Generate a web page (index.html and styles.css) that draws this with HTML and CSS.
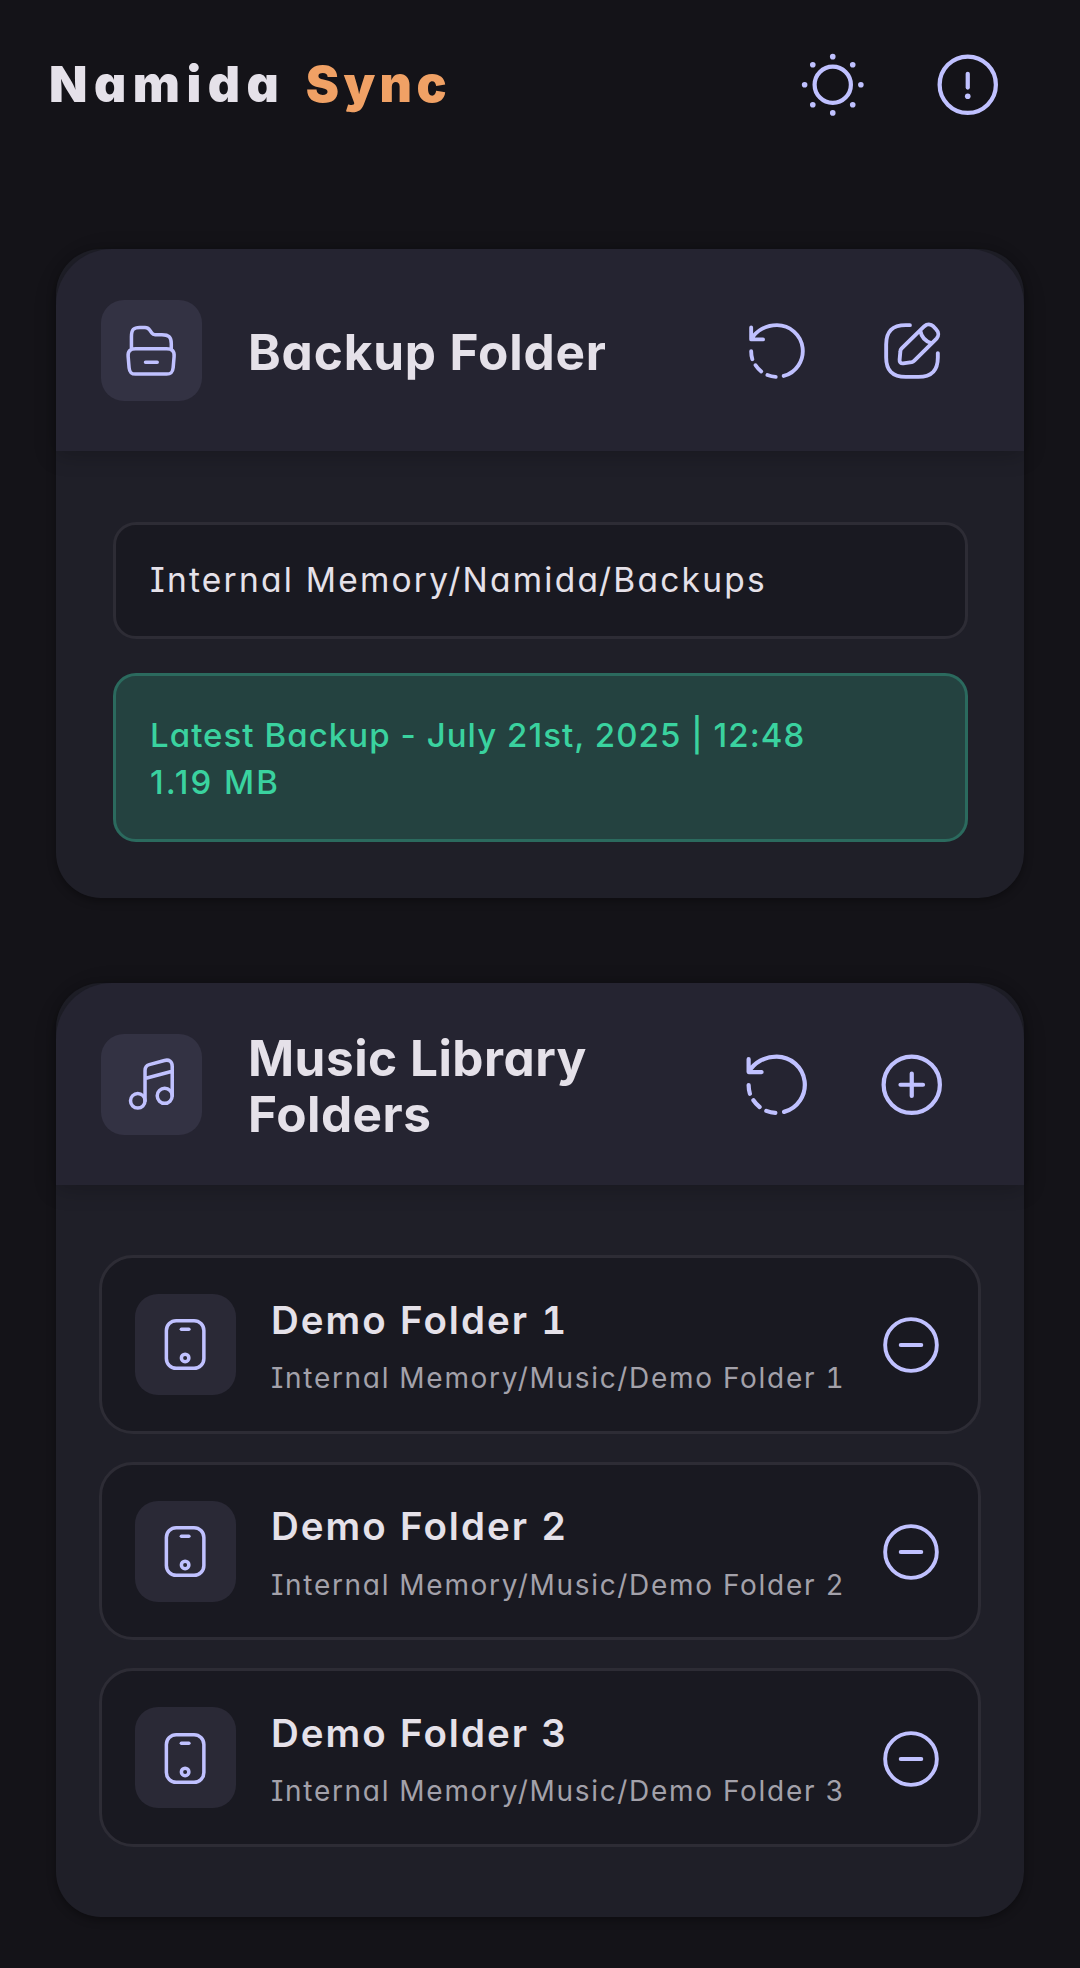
FILE: index.html
```html
<!DOCTYPE html>
<html lang="en">
<head>
<meta charset="utf-8">
<title>Namida Sync</title>
<link rel="stylesheet" href="styles.css">
</head>
<body>
<svg class="defs" width="0" height="0" aria-hidden="true">
  <symbol id="restore" viewBox="0 0 24 24"><path d="M2 2.9V7.5H6.6M2.2 7.3C4 4.1 7.7 2 12 2a10 10 0 0 1 2.6 19.65M2 12.1c0 1.1.15 2.1.45 3.1M3.7 17.5c.6.9 1.3 1.7 2.2 2.4M8.3 21.3c1 .4 2.1.65 3.2.7"/></symbol>
  <symbol id="minus" viewBox="0 0 24 24"><circle cx="12" cy="12" r="10"/><path d="M8 12h8"/></symbol>
  <symbol id="device" viewBox="0 0 24 24"><rect x="4" y="2" width="16" height="20.3" rx="4.2"/><path d="M10.4 5.7h3.2"/><circle cx="12" cy="17.9" r="1.6"/></symbol>
</svg>

<header class="topbar">
  <h1 class="brand"><span class="brand-name">Namida</span> <span class="brand-accent">Sync</span></h1>
  <button class="icon-btn" aria-label="Theme">
    <svg class="icon icon-lg" viewBox="0 0 24 24"><circle cx="12" cy="12" r="6.45"/><g class="dots"><circle cx="12" cy="2" r="1"/><circle cx="12" cy="22" r="1"/><circle cx="2" cy="12" r="1"/><circle cx="22" cy="12" r="1"/><circle cx="4.9" cy="4.9" r="1"/><circle cx="19.1" cy="4.9" r="1"/><circle cx="4.9" cy="19.1" r="1"/><circle cx="19.1" cy="19.1" r="1"/></g></svg>
  </button>
  <button class="icon-btn" aria-label="About">
    <svg class="icon icon-lg" viewBox="0 0 24 24"><circle cx="12" cy="12" r="10"/><path d="M12 8.1V13"/><g class="dots"><circle cx="12" cy="16.1" r="1"/></g></svg>
  </button>
</header>

<main class="content">
  <section class="card">
    <div class="card-head">
      <span class="tile"><svg class="icon icon-tile" viewBox="0 0 24 24"><path d="M3.6 11.2V6.3c0-3 .9-4 3.6-4h2.2c1 0 1.4.2 1.9 1l1 1.4c.4.6.7.7 1.4.7h2.9c3 0 4 1 4 3.8v2M5.4 11.4h13.2c2.5 0 3.4 1.2 3.2 3.4l-.4 4.7c-.2 2-.8 2.7-2.8 2.7H5.4c-2 0-2.6-.7-2.8-2.7l-.4-4.7c-.2-2.2.7-3.4 3.2-3.4zM9.6 17.2h5"/></svg></span>
      <h2 class="card-title title-backup">Backup Folder</h2>
      <button class="icon-btn" aria-label="Restore default"><svg class="icon"><use href="#restore"/></svg></button>
      <button class="icon-btn" aria-label="Edit">
        <svg class="icon" viewBox="0 0 24 24"><path d="M11.2 2H9.6C4.4 2 2 4.4 2 9.5v5C2 19.6 4.4 22 9.6 22h4.9c5.1 0 7.5-2.4 7.5-7.5v-1.7M16.8 2.4c1-.9 2.5-.9 3.5.1l1.1 1.2c1 1 1 2.5.1 3.5l-8.6 8.5c-.3.3-.6.5-1 .6l-3.3.5c-.9.1-1.5-.5-1.4-1.4l.3-3.3c0-.4.2-.8.5-1.1zM15.2 4.1c.4 2.3 2.1 4.2 4.4 4.9"/></svg>
      </button>
    </div>
    <div class="card-body body-fields">
      <div class="field">Internal Memory/Namida/Backups</div>
      <div class="field status">Latest Backup - July 21st, 2025 | 12:48<br><span class="size">1.19 MB</span></div>
    </div>
  </section>

  <section class="card">
    <div class="card-head">
      <span class="tile"><svg class="icon icon-tile" viewBox="0 0 24 24"><circle cx="6.3" cy="19.1" r="3.1"/><circle cx="17.8" cy="17" r="3.2"/><path d="M9.4 19.1V6.2c0-1.4.5-2.1 1.8-2.5l6.5-1.8c2-.5 3.3.4 3.3 2.5V17M9.4 9.6L21 6.5"/></svg></span>
      <h2 class="card-title">Music Library Folders</h2>
      <button class="icon-btn" aria-label="Rescan"><svg class="icon icon-lg"><use href="#restore"/></svg></button>
      <button class="icon-btn" aria-label="Add folder"><svg class="icon icon-lg" viewBox="0 0 24 24"><circle cx="12" cy="12" r="10"/><path d="M8 12h8M12 8v8"/></svg></button>
    </div>
    <div class="card-body body-rows">
      <article class="row">
        <span class="tile tile-dim"><svg class="icon icon-tile"><use href="#device"/></svg></span>
        <div class="row-text"><h3 class="row-name">Demo Folder 1</h3><p class="row-path">Internal Memory/Music/Demo Folder 1</p></div>
        <button class="row-btn" aria-label="Remove"><svg class="icon"><use href="#minus"/></svg></button>
      </article>
      <article class="row">
        <span class="tile tile-dim"><svg class="icon icon-tile"><use href="#device"/></svg></span>
        <div class="row-text"><h3 class="row-name">Demo Folder 2</h3><p class="row-path">Internal Memory/Music/Demo Folder 2</p></div>
        <button class="row-btn" aria-label="Remove"><svg class="icon"><use href="#minus"/></svg></button>
      </article>
      <article class="row">
        <span class="tile tile-dim"><svg class="icon icon-tile"><use href="#device"/></svg></span>
        <div class="row-text"><h3 class="row-name">Demo Folder 3</h3><p class="row-path">Internal Memory/Music/Demo Folder 3</p></div>
        <button class="row-btn" aria-label="Remove"><svg class="icon"><use href="#minus"/></svg></button>
      </article>
    </div>
  </section>
</main>
</body>
</html>
```
FILE: styles.css
```css
* { box-sizing: border-box; margin: 0; padding: 0; }

body {
  background: #141318;
  color: #e5e1e9;
  font-family: Inter, "Liberation Sans", sans-serif;
  font-feature-settings: "cv11", "cv08";
  min-height: 1968px;
}

button { background: none; border: 0; }
.defs { position: absolute; }

.icon {
  display: block;
  width: 62px;
  height: 62px;
  fill: none;
  stroke: #c0c1ff;
  stroke-width: 1.5;
  stroke-linecap: round;
  stroke-linejoin: round;
}
.icon-lg { width: 67.5px; height: 67.5px; }
.icon-tile { width: 56.25px; height: 56.25px; }
.dots { fill: #c0c1ff; stroke: none; }

.icon-btn {
  flex: none;
  display: flex;
  align-items: center;
  justify-content: center;
  width: 135px;
  height: 135px;
  padding-top: 2px;
}

.topbar {
  display: flex;
  align-items: center;
  height: 168px;
  padding: 0 45px 0 49px;
}
.brand {
  flex: 1;
  padding-bottom: 1px;
  font-size: 50px;
  font-weight: 900;
  line-height: 64px;
  letter-spacing: 6.5px;
}
.brand-accent { margin-left: 4px; color: #f0a165; letter-spacing: 4.4px; }

.content {
  display: flex;
  flex-direction: column;
  gap: 85px;
  padding: 81px 56px 51px;
}

.card {
  border-radius: 45px;
  background: #1f1f28;
  box-shadow: 0 3px 8px rgba(0, 0, 0, .35);
}
.card-head {
  display: flex;
  align-items: center;
  height: 202px;
  padding: 0 45px;
  border-radius: 56px 56px 0 0;
  background: #252431;
  box-shadow: 0 4px 22px rgba(0, 0, 0, .22);
}
.card-title {
  flex: 1;
  padding: 3px 0 0 46px;
  font-size: 49.5px;
  font-weight: 650;
  line-height: 56px;
  letter-spacing: .5px;
}
.title-backup { letter-spacing: .85px; }

.tile {
  flex: none;
  display: flex;
  align-items: center;
  justify-content: center;
  width: 101px;
  height: 101px;
  border-radius: 23px;
  background: #333243;
}
.tile-dim { background: #2a2936; }

.card-body { display: flex; flex-direction: column; }
.body-fields { gap: 34px; padding: 71px 56px 56px 57px; }
.body-rows { gap: 28px; padding: 70px 43px; }

.field {
  padding: 32px 34px;
  border: 3px solid #2d2c35;
  border-radius: 23px;
  background: #191921;
  font-size: 33.5px;
  line-height: 47px;
  letter-spacing: 2.22px;
}
.status {
  padding: 36px 34px 33px;
  border-color: #2b6a5e;
  background: #244240;
  color: #3ad29f;
  font-size: 33px;
  font-weight: 500;
  letter-spacing: 1.05px;
}
.size { letter-spacing: 2px; }

.row {
  display: flex;
  align-items: center;
  height: 178.7px;
  padding: 0 36px 0 33px;
  border: 3px solid #2d2c35;
  border-radius: 34px;
  background: #191921;
  font-feature-settings: "cv11", "cv08", "tnum";
}
.row-text { flex: 1; display: flex; flex-direction: column; gap: 12.5px; padding: 0 0 1px 35px; white-space: nowrap; }
.row-name { font-size: 38.5px; font-weight: 600; line-height: 56px; letter-spacing: 2px; }
.row-path { font-size: 28px; line-height: 36px; letter-spacing: 1.7px; color: #a3a1aa; }
.row-btn { flex: none; padding-top: 2px; }
```
